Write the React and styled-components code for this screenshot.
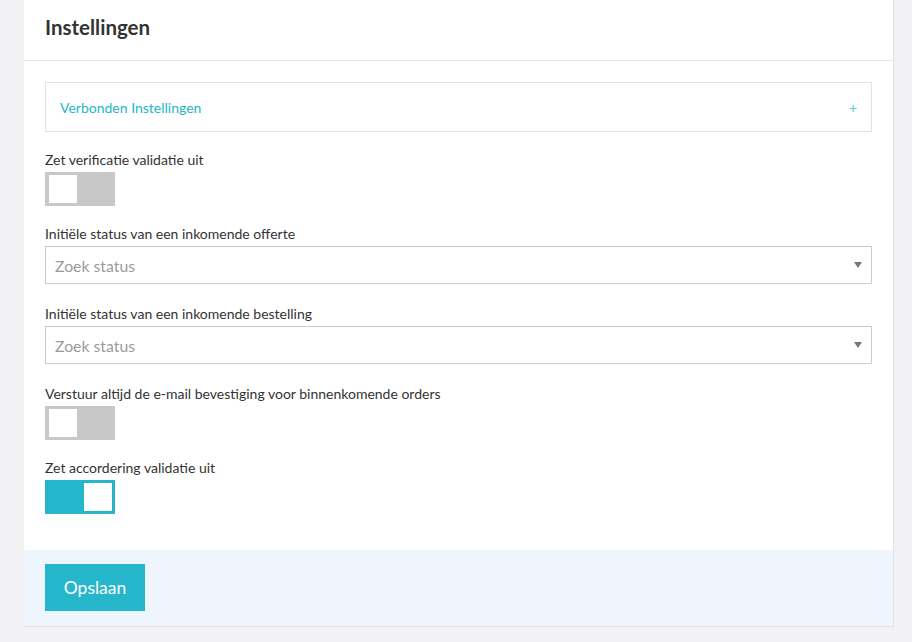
import React from 'react'
import styled, { createGlobalStyle } from 'styled-components'

const GlobalStyle = createGlobalStyle`
  body {
    margin: 0;
    background: #f2f2f4;
    font-family: Lato, "Open Sans", sans-serif;
    color: #333;
  }
`

const Page = styled.div`
  padding-left: 24px;
  height: 642px;
`

const Card = styled.div`
  width: 869px;
  background: #fff;
  border-right: 1px solid #e4e4e6;
  border-bottom: 1px solid #e2e2e4;
`

const Header = styled.div`
  height: 60px;
  border-bottom: 1px solid #e8e8e8;
  padding: 0 21px;
  display: flex;
  align-items: center;
`

const Title = styled.h1`
  margin: 0 0 6px;
  font-size: 20.5px;
  font-weight: 700;
  color: #333;
`

const Body = styled.div`
  padding: 21px 21px 36px;
`

const Accordion = styled.div`
  height: 48px;
  border: 1px solid #e3e3e3;
  display: flex;
  align-items: center;
  justify-content: space-between;
  padding: 0 14px;
  color: #26b6cc;
  font-size: 14px;
  margin-bottom: 19px;
`

const Plus = styled.span`
  font-size: 14px;
  color: #5cc3d6;
`

const Field = styled.div`
  display: flex;
  flex-direction: column;
  gap: 3px;
  margin-bottom: ${p => p.$space || 19}px;
  &:last-child { margin-bottom: 0; }
`

const Label = styled.label`
  font-size: 14px;
  line-height: 18px;
  color: #333;
`

const Toggle = styled.div`
  width: 70px;
  height: 34px;
  box-sizing: border-box;
  padding: 3px 3px 3px 4px;
  background: ${p => (p.$on ? '#26b6cc' : '#c8c8c8')};
  display: flex;
  justify-content: ${p => (p.$on ? 'flex-end' : 'flex-start')};
`

const Knob = styled.div`
  width: 28px;
  height: 28px;
  background: #fff;
`

const Select = styled.div`
  height: 38px;
  box-sizing: border-box;
  border: 1px solid #cccccc;
  display: flex;
  align-items: center;
  justify-content: space-between;
  padding: 0 9px 0 9px;
  font-size: 15.8px;
  color: #9a9a9a;
`

const Caret = styled.span`
  width: 0;
  height: 0;
  border-left: 4px solid transparent;
  border-right: 4px solid transparent;
  border-top: 6px solid #777;
`

const Footer = styled.div`
  background: #eef5fc;
  padding: 14px 21px 15px;
`

const Button = styled.button`
  width: 100px;
  height: 47px;
  border: none;
  background: #26b6cc;
  color: #fff;
  font-family: Lato, sans-serif;
  font-size: 17.5px;
  cursor: pointer;
`

const App = () => (
  <Page>
    <GlobalStyle />
    <Card>
      <Header>
        <Title>Instellingen</Title>
      </Header>
      <Body>
        <Accordion>
          <span>Verbonden Instellingen</span>
          <Plus>+</Plus>
        </Accordion>
        <Field>
          <Label>Zet verificatie validatie uit</Label>
          <Toggle><Knob /></Toggle>
        </Field>
        <Field $space={21}>
          <Label>Initiële status van een inkomende offerte</Label>
          <Select>Zoek status<Caret /></Select>
        </Field>
        <Field $space={21}>
          <Label>Initiële status van een inkomende bestelling</Label>
          <Select>Zoek status<Caret /></Select>
        </Field>
        <Field>
          <Label>Verstuur altijd de e-mail bevestiging voor binnenkomende orders</Label>
          <Toggle><Knob /></Toggle>
        </Field>
        <Field>
          <Label>Zet accordering validatie uit</Label>
          <Toggle $on><Knob /></Toggle>
        </Field>
      </Body>
      <Footer>
        <Button>Opslaan</Button>
      </Footer>
    </Card>
  </Page>
)

export default App
